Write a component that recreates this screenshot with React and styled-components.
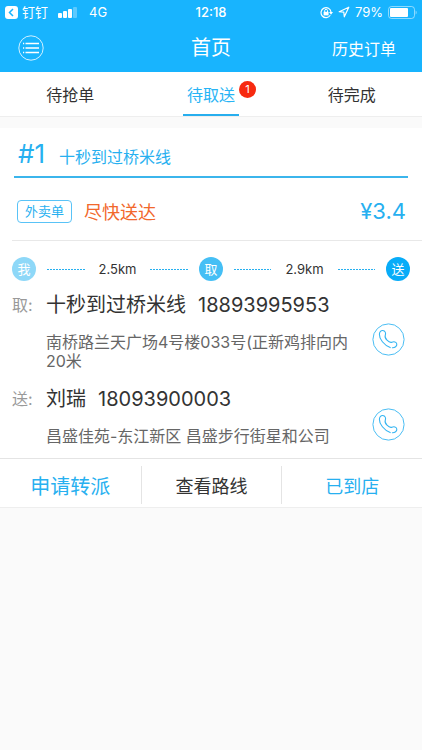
import React from 'react';
import styled, { createGlobalStyle } from 'styled-components';

const GlobalStyle = createGlobalStyle`
  * {
    box-sizing: border-box;
  }
  body {
    margin: 0;
    background: #fafafa;
    color: #333;
    font-family: Inter, 'Noto Sans CJK SC', sans-serif;
    font-size: 16px;
  }
  button {
    padding: 0;
    border: 0;
    background: none;
    color: inherit;
    font: inherit;
    cursor: pointer;
  }
  a {
    color: inherit;
    text-decoration: none;
  }
  h1, h2, p {
    margin: 0;
    font-weight: 400;
  }
  svg {
    display: block;
    flex: none;
  }
`;

const Top = styled.header`
  background: #18b4fe;
  color: #fff;
`;

const StatusBar = styled.div`
  display: grid;
  grid-template-columns: 1fr auto 1fr;
  align-items: center;
  height: 24px;
  padding: 0 5px;
  font-size: 13px;
  line-height: 24px;
`;

const StatusGroup = styled.div`
  display: flex;
  align-items: center;
  justify-content: ${(props) => (props.$end ? 'flex-end' : 'flex-start')};
  gap: ${(props) => (props.$end ? '5px' : '4px')};
`;

const Carrier = styled.span`
  margin-right: 6px;
`;

const Network = styled.span`
  margin-left: 8px;
`;

const Clock = styled.span`
  font-weight: 500;
`;

const NavBar = styled.div`
  display: grid;
  grid-template-columns: 1fr auto 1fr;
  align-items: center;
  height: 48px;
  padding: 0 18px;
`;

const MenuButton = styled.button`
  justify-self: start;
`;

const Title = styled.h1`
  font-size: 20px;
  line-height: 24px;
`;

const HistoryLink = styled.a`
  justify-self: end;
  margin-right: 8px;
`;

const Tabs = styled.nav`
  display: grid;
  grid-template-columns: repeat(3, 1fr);
  justify-items: center;
  height: 45px;
  background: #fff;
  border-bottom: 1px solid #eee;
`;

const Tab = styled.button`
  position: relative;
  padding: 2px 4px 0;
  border-bottom: 2px solid ${(props) => (props.$active ? '#27aeee' : 'transparent')};
  color: ${(props) => (props.$active ? '#27b4f5' : '#333')};
`;

const Badge = styled.span`
  position: absolute;
  top: 9px;
  left: 100%;
  width: 17px;
  border-radius: 50%;
  background: #f72a10;
  color: #fff;
  font-size: 11px;
  line-height: 17px;
`;

const Card = styled.article`
  margin-top: 11px;
  background: #fff;
  border-bottom: 1px solid #eee;
`;

const CardTitle = styled.h2`
  display: flex;
  align-items: baseline;
  gap: 14px;
  height: 50px;
  margin: 0 14px;
  padding: 8px 4px 0;
  border-bottom: 2px solid #3bb5ec;
  color: #27b0f0;
  font-size: 16px;
  line-height: 36px;
`;

const OrderNumber = styled.span`
  font-size: 26px;
`;

const Summary = styled.div`
  display: flex;
  align-items: center;
  height: 63px;
  margin-left: 12px;
  padding: 4px 16px 0 5px;
  border-bottom: 1px solid #e8e8e8;
`;

const OrderType = styled.span`
  padding: 0 7px;
  border: 1px solid #59c3f7;
  border-radius: 4px;
  color: #27b0f0;
  font-size: 13px;
  line-height: 21px;
`;

const Urgency = styled.span`
  margin-left: 12px;
  color: #f2682c;
  font-size: 18px;
`;

const Price = styled.span`
  margin-left: auto;
  color: #27b0f0;
  font-size: 22px;
`;

const Route = styled.div`
  display: flex;
  align-items: center;
  height: 48px;
  margin: 4px 12px 0;
`;

const Stop = styled.span`
  flex: none;
  width: 24px;
  border-radius: 50%;
  background: ${(props) => props.$color};
  color: #fff;
  font-size: 13px;
  line-height: 24px;
  text-align: center;
`;

const Leg = styled.span`
  display: flex;
  flex: 1;
  align-items: center;
  gap: 14px;
  padding: 0 11px;
  font-size: 13px;
  &::before,
  &::after {
    content: '';
    flex: 1;
    height: 1px;
    background: repeating-linear-gradient(90deg, #27b0f0 0 2px, transparent 2px 3px);
  }
`;

const Contact = styled.section`
  display: grid;
  grid-template-columns: 34px 1fr 56px;
  min-height: ${(props) => (props.$last ? '71px' : '94px')};
  padding: 0 6px 0 12px;
`;

const ContactLabel = styled.span`
  color: #999;
  line-height: 24px;
`;

const ContactName = styled.p`
  font-size: 20px;
  line-height: 24px;
  white-space: nowrap;
`;

const Phone = styled.span`
  margin-left: 12px;
`;

const Address = styled.p`
  margin-top: 16px;
  color: #666;
  line-height: 19px;
`;

const CallButton = styled.button`
  align-self: start;
  justify-self: center;
  margin-top: ${(props) => (props.$last ? '21px' : '30px')};
`;

const Actions = styled.footer`
  display: grid;
  grid-template-columns: repeat(3, 1fr);
  height: 49px;
  padding: 7px 0 3px;
  border-top: 1px solid #e4e4e4;
`;

const Action = styled.button`
  color: ${(props) => (props.$primary ? '#27b0f0' : '#333')};
  font-size: ${(props) => (props.$large ? '20px' : '18px')};
  & + & {
    border-left: 1px solid #e4e4e4;
  }
`;

const contacts = [
  {
    label: '取:',
    name: '十秒到过桥米线',
    phone: '18893995953',
    address: '南桥路兰天广场4号楼033号(正新鸡排向内20米',
  },
  {
    label: '送:',
    name: '刘瑞',
    phone: '18093900003',
    address: '昌盛佳苑-东江新区 昌盛步行街星和公司',
  },
];

function BackIcon() {
  return (
    <svg width="13" height="13" viewBox="0 0 13 13">
      <rect width="13" height="13" rx="3" fill="#fff" />
      <path d="M8 3 4.5 6.5 8 10" fill="none" stroke="#18b4fe" strokeWidth="1.5" />
    </svg>
  );
}

function SignalIcon() {
  return (
    <svg width="19" height="11" viewBox="0 0 19 11" fill="#fff">
      <rect x="0" y="6" width="4" height="5" rx="1" />
      <rect x="5" y="4" width="4" height="7" rx="1" />
      <rect x="10" y="2" width="4" height="9" rx="1" />
      <rect x="15" y="0" width="4" height="11" rx="1" opacity="0.3" />
    </svg>
  );
}

function LockIcon() {
  return (
    <svg width="13" height="13" viewBox="0 0 13 13" fill="none" stroke="#fff">
      <path d="M10.3 9.3A5 5 0 1 1 11 6" strokeWidth="1.2" />
      <path d="M9 6h4l-2 2.7z" fill="#fff" stroke="none" />
      <rect x="3.6" y="5.8" width="5" height="3.6" fill="#fff" stroke="none" />
      <path d="M4.7 6V4.7a1.4 1.4 0 0 1 2.8 0V6" />
    </svg>
  );
}

function LocationIcon() {
  return (
    <svg width="12" height="12" viewBox="0 0 12 12" fill="none" stroke="#fff" strokeWidth="1.2" strokeLinejoin="round">
      <path d="M10.8 1.2 1.2 5.7l4.6.5.5 4.6z" />
    </svg>
  );
}

function BatteryIcon() {
  return (
    <svg width="29" height="13" viewBox="0 0 29 13">
      <rect x="0.5" y="0.5" width="26" height="12" rx="3" fill="none" stroke="#fff" opacity="0.5" />
      <rect x="2" y="2" width="18" height="9" rx="1" fill="#fff" />
      <path d="M27.7 4.5c1.2.6 1.2 3.4 0 4z" fill="#fff" opacity="0.6" />
    </svg>
  );
}

function MenuIcon() {
  return (
    <svg width="26" height="26" viewBox="0 0 26 26" fill="none" stroke="#fff">
      <circle cx="13" cy="13" r="12.2" strokeWidth="0.8" />
      <path d="M7.5 8.5H21M7.5 13H21M7.5 17.5H21" strokeWidth="1.4" />
      <path d="M5 8.5h1.2M5 13h1.2M5 17.5h1.2" strokeWidth="1.4" />
    </svg>
  );
}

function CallIcon() {
  return (
    <svg width="33" height="33" viewBox="0 0 33 33" fill="none" stroke="#35b5f2">
      <circle cx="16.5" cy="16.5" r="15.6" strokeWidth="0.9" />
      <path
        d="M18.2 24.6C12 22 7.2 16 7.4 11.2 7.5 8.6 9 7.4 10.8 7.5c2.4.2 3.3 2.6 2.5 4.6-.8 2 .2 3.5 1.7 5 1.6 1.7 3.1 2.9 4.9 2.1 1.9-.8 4.6-.4 4.9 1.8.3 2.3-2 3.9-4.4 3.8"
        strokeWidth="1.1"
        strokeLinecap="round"
      />
    </svg>
  );
}

function App() {
  return (
    <>
      <GlobalStyle />
      <Top>
        <StatusBar>
          <StatusGroup>
            <BackIcon />
            <Carrier>钉钉</Carrier>
            <SignalIcon />
            <Network>4G</Network>
          </StatusGroup>
          <Clock>12:18</Clock>
          <StatusGroup $end>
            <LockIcon />
            <LocationIcon />
            <span>79%</span>
            <BatteryIcon />
          </StatusGroup>
        </StatusBar>
        <NavBar>
          <MenuButton type="button" aria-label="菜单">
            <MenuIcon />
          </MenuButton>
          <Title>首页</Title>
          <HistoryLink href="#history">历史订单</HistoryLink>
        </NavBar>
      </Top>
      <Tabs>
        <Tab type="button">待抢单</Tab>
        <Tab type="button" $active>
          待取送
          <Badge>1</Badge>
        </Tab>
        <Tab type="button">待完成</Tab>
      </Tabs>
      <main>
        <Card>
          <CardTitle>
            <OrderNumber>#1</OrderNumber>
            <span>十秒到过桥米线</span>
          </CardTitle>
          <Summary>
            <OrderType>外卖单</OrderType>
            <Urgency>尽快送达</Urgency>
            <Price>¥3.4</Price>
          </Summary>
          <Route>
            <Stop $color="#8ed8f8">我</Stop>
            <Leg>2.5km</Leg>
            <Stop $color="#45bff5">取</Stop>
            <Leg>2.9km</Leg>
            <Stop $color="#08acf8">送</Stop>
          </Route>
          {contacts.map((contact, index) => {
            const last = index === contacts.length - 1;
            return (
              <Contact key={contact.phone} $last={last}>
                <ContactLabel>{contact.label}</ContactLabel>
                <div>
                  <ContactName>
                    {contact.name}
                    <Phone>{contact.phone}</Phone>
                  </ContactName>
                  <Address>{contact.address}</Address>
                </div>
                <CallButton type="button" $last={last} aria-label={`拨打 ${contact.phone}`}>
                  <CallIcon />
                </CallButton>
              </Contact>
            );
          })}
          <Actions>
            <Action type="button" $primary $large>申请转派</Action>
            <Action type="button">查看路线</Action>
            <Action type="button" $primary>已到店</Action>
          </Actions>
        </Card>
      </main>
    </>
  );
}

export default App;
